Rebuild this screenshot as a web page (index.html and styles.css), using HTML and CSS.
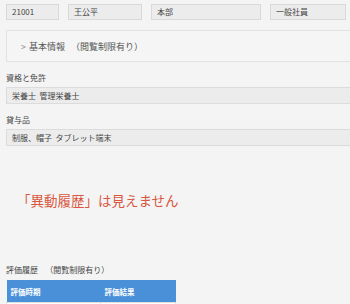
FILE: index.html
```html
<!DOCTYPE html>
<html lang="ja">
<head>
    <meta charset="UTF-8">
    <title>社員情報</title>
    <link rel="stylesheet" href="styles.css">
</head>
<body>
    <div id="profile">
        <div class="top-row">
            <div class="box box-id">21001</div>
            <div class="box box-name">王公平</div>
            <div class="box box-dept">本部</div>
            <div class="box box-rank">一般社員</div>
        </div>

        <!-- 基本情報 panel -->
        <div class="panel">
            <span class="chevron">&gt;</span>
            <span class="panel-title">基本情報</span>
            <span class="panel-note">（閲覧制限有り）</span>
        </div>

        <div class="section">
            <div class="label">資格と免許</div>
            <div class="field">栄養士&nbsp;&nbsp;管理栄養士</div>
        </div>
        <div class="section">
            <div class="label">貸与品</div>
            <div class="field">制服、帽子&nbsp;&nbsp;タブレット端末</div>
        </div>

        <div class="notice">「異動履歴」は見えません</div>

        <div class="label eval-label">評価履歴&nbsp;&nbsp;&nbsp;&nbsp;（閲覧制限有り）</div>
        <table class="eval-table">
            <thead>
                <tr>
                    <th class="col-date">評価時期</th>
                    <th>評価結果</th>
                </tr>
            </thead>
            <tbody>
                <tr>
                    <td class="col-date"></td>
                    <td></td>
                </tr>
            </tbody>
        </table>
    </div>
</body>
</html>
```

FILE: styles.css
```css
html, body {
    margin: 0;
    padding: 0;
    overflow: hidden;
}
body {
    font-family: "Noto Sans CJK JP", "Noto Sans", sans-serif;
    background-color: #f4f4f4;
    color: #333;
    width: 350px;
    height: 304px;
}
#profile {
    padding: 4px 0 0 6px;
}
.top-row {
    display: flex;
    gap: 9px;
}
.box {
    box-sizing: border-box;
    height: 16px;
    line-height: 14px;
    padding-left: 5px;
    font-size: 8px;
    color: #444;
    background-color: #ececec;
    border: 1px solid #d9d9d9;
}
.box-id { width: 53px; }
.box-name { width: 74px; }
.box-dept { width: 110px; }
.box-rank { width: 76px; }
.panel {
    box-sizing: border-box;
    margin-top: 10px;
    height: 32px;
    display: flex;
    align-items: center;
    padding-left: 14px;
    font-size: 9px;
    color: #555;
    background-color: #f5f5f5;
    border: 1px solid #e2e2e2;
    border-right: none;
}
.chevron {
    color: #888;
    margin-right: 3px;
}
.panel-note {
    margin-left: 6px;
}
.section {
    margin-top: 10px;
}
.label {
    font-size: 8px;
    line-height: 12px;
    color: #444;
}
.field {
    box-sizing: border-box;
    margin-top: 3px;
    height: 17px;
    line-height: 15px;
    padding-left: 5px;
    font-size: 8px;
    color: #444;
    background-color: #ececec;
    border: 1px solid #dcdcdc;
    border-right: none;
}
.notice {
    margin-top: 45px;
    padding-left: 11px;
    font-size: 13.5px;
    line-height: 18px;
    color: #d9573f;
}
.eval-label {
    margin-top: 55px;
}
.eval-table {
    margin-top: 4px;
    width: 170px;
    border-collapse: collapse;
    font-size: 7.5px;
}
.eval-table th {
    height: 22px;
    padding: 0 0 0 4px;
    text-align: left;
    color: #fff;
    font-weight: bold;
    background-color: #4a90d9;
}
.eval-table td {
    height: 14px;
    background-color: #fff;
    border: 1px solid #e0e0e0;
}
.col-date {
    width: 90px;
}
```
